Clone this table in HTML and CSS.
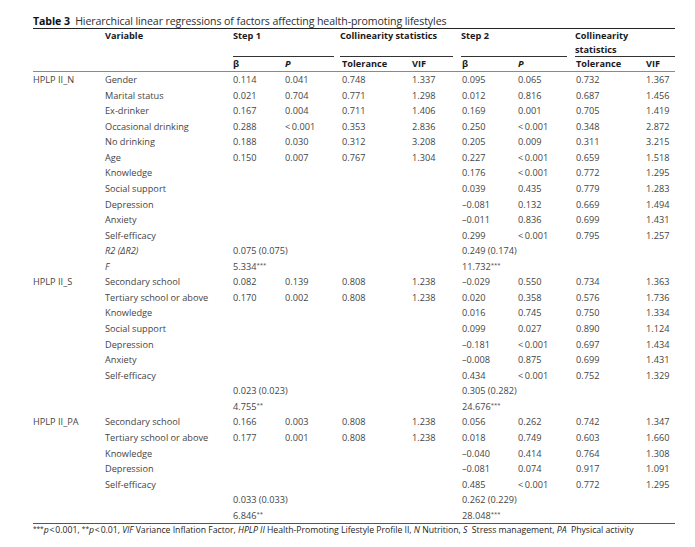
FILE: index.html
```html
<!DOCTYPE html>
<html>
<head>
<meta charset="utf-8">
<link rel="stylesheet" href="styles.css">
</head>
<body>
<div class="wrap">
  <div class="caption"><b>Table 3</b>&nbsp; Hierarchical linear regressions of factors affecting health-promoting lifestyles</div>
  <table class="tbl">
    <colgroup>
      <col class="c1"><col class="c2"><col class="c3"><col class="c4"><col class="c5"><col class="c6"><col class="c7"><col class="c8"><col class="c9"><col class="c10">
    </colgroup>
    <thead>
      <tr class="h1">
        <th></th>
        <th><div class="hb">Variable</div></th>
        <th colspan="2"><div class="hb grp g1">Step 1</div></th>
        <th colspan="2"><div class="hb grp g2 nowrap">Collinearity statistics</div></th>
        <th colspan="2"><div class="hb grp g3">Step 2</div></th>
        <th colspan="2"><div class="hb grp g4">Collinearity<br>statistics</div></th>
      </tr>
      <tr class="h2">
        <th></th><th></th>
        <th>β</th><th><i>P</i></th>
        <th>Tolerance</th><th>VIF</th>
        <th>β</th><th><i>P</i></th>
        <th>Tolerance</th><th>VIF</th>
      </tr>
    </thead>
    <tbody>
      <tr><td>HPLP II_N</td><td>Gender</td><td>0.114</td><td>0.041</td><td>0.748</td><td>1.337</td><td>0.095</td><td>0.065</td><td>0.732</td><td>1.367</td></tr>
      <tr><td></td><td>Marital status</td><td>0.021</td><td>0.704</td><td>0.771</td><td>1.298</td><td>0.012</td><td>0.816</td><td>0.687</td><td>1.456</td></tr>
      <tr><td></td><td>Ex-drinker</td><td>0.167</td><td>0.004</td><td>0.711</td><td>1.406</td><td>0.169</td><td>0.001</td><td>0.705</td><td>1.419</td></tr>
      <tr><td></td><td>Occasional drinking</td><td>0.288</td><td>&lt;&#8201;0.001</td><td>0.353</td><td>2.836</td><td>0.250</td><td>&lt;&#8201;0.001</td><td>0.348</td><td>2.872</td></tr>
      <tr><td></td><td>No drinking</td><td>0.188</td><td>0.030</td><td>0.312</td><td>3.208</td><td>0.205</td><td>0.009</td><td>0.311</td><td>3.215</td></tr>
      <tr><td></td><td>Age</td><td>0.150</td><td>0.007</td><td>0.767</td><td>1.304</td><td>0.227</td><td>&lt;&#8201;0.001</td><td>0.659</td><td>1.518</td></tr>
      <tr><td></td><td>Knowledge</td><td></td><td></td><td></td><td></td><td>0.176</td><td>&lt;&#8201;0.001</td><td>0.772</td><td>1.295</td></tr>
      <tr><td></td><td>Social support</td><td></td><td></td><td></td><td></td><td>0.039</td><td>0.435</td><td>0.779</td><td>1.283</td></tr>
      <tr><td></td><td>Depression</td><td></td><td></td><td></td><td></td><td>–0.081</td><td>0.132</td><td>0.669</td><td>1.494</td></tr>
      <tr><td></td><td>Anxiety</td><td></td><td></td><td></td><td></td><td>–0.011</td><td>0.836</td><td>0.699</td><td>1.431</td></tr>
      <tr><td></td><td>Self-efficacy</td><td></td><td></td><td></td><td></td><td>0.299</td><td>&lt;&#8201;0.001</td><td>0.795</td><td>1.257</td></tr>
      <tr><td></td><td><i>R2 (ΔR2)</i></td><td colspan="2">0.075 (0.075)</td><td></td><td></td><td colspan="2">0.249 (0.174)</td><td></td><td></td></tr>
      <tr><td></td><td><i>F</i></td><td colspan="2">5.334<sup>***</sup></td><td></td><td></td><td colspan="2">11.732<sup>***</sup></td><td></td><td></td></tr>

      <tr><td>HPLP II_S</td><td>Secondary school</td><td>0.082</td><td>0.139</td><td>0.808</td><td>1.238</td><td>–0.029</td><td>0.550</td><td>0.734</td><td>1.363</td></tr>
      <tr><td></td><td>Tertiary school or above</td><td>0.170</td><td>0.002</td><td>0.808</td><td>1.238</td><td>0.020</td><td>0.358</td><td>0.576</td><td>1.736</td></tr>
      <tr><td></td><td>Knowledge</td><td></td><td></td><td></td><td></td><td>0.016</td><td>0.745</td><td>0.750</td><td>1.334</td></tr>
      <tr><td></td><td>Social support</td><td></td><td></td><td></td><td></td><td>0.099</td><td>0.027</td><td>0.890</td><td>1.124</td></tr>
      <tr><td></td><td>Depression</td><td></td><td></td><td></td><td></td><td>–0.181</td><td>&lt;&#8201;0.001</td><td>0.697</td><td>1.434</td></tr>
      <tr><td></td><td>Anxiety</td><td></td><td></td><td></td><td></td><td>–0.008</td><td>0.875</td><td>0.699</td><td>1.431</td></tr>
      <tr><td></td><td>Self-efficacy</td><td></td><td></td><td></td><td></td><td>0.434</td><td>&lt;&#8201;0.001</td><td>0.752</td><td>1.329</td></tr>
      <tr><td></td><td></td><td colspan="2">0.023 (0.023)</td><td></td><td></td><td colspan="2">0.305 (0.282)</td><td></td><td></td></tr>
      <tr><td></td><td></td><td colspan="2">4.755<sup>**</sup></td><td></td><td></td><td colspan="2">24.676<sup>***</sup></td><td></td><td></td></tr>

      <tr><td>HPLP II_PA</td><td>Secondary school</td><td>0.166</td><td>0.003</td><td>0.808</td><td>1.238</td><td>0.056</td><td>0.262</td><td>0.742</td><td>1.347</td></tr>
      <tr><td></td><td>Tertiary school or above</td><td>0.177</td><td>0.001</td><td>0.808</td><td>1.238</td><td>0.018</td><td>0.749</td><td>0.603</td><td>1.660</td></tr>
      <tr><td></td><td>Knowledge</td><td></td><td></td><td></td><td></td><td>–0.040</td><td>0.414</td><td>0.764</td><td>1.308</td></tr>
      <tr><td></td><td>Depression</td><td></td><td></td><td></td><td></td><td>–0.081</td><td>0.074</td><td>0.917</td><td>1.091</td></tr>
      <tr><td></td><td>Self-efficacy</td><td></td><td></td><td></td><td></td><td>0.485</td><td>&lt;&#8201;0.001</td><td>0.772</td><td>1.295</td></tr>
      <tr><td></td><td></td><td colspan="2">0.033 (0.033)</td><td></td><td></td><td colspan="2">0.262 (0.229)</td><td></td><td></td></tr>
      <tr><td></td><td></td><td colspan="2">6.846<sup>**</sup></td><td></td><td></td><td colspan="2">28.048<sup>***</sup></td><td></td><td></td></tr>
    </tbody>
  </table>
  <div class="foot"><sup>***</sup><i>p</i>&#8202;&lt;&#8202;0.001, <sup>**</sup><i>p</i>&#8202;&lt;&#8202;0.01, <i>VIF</i> Variance Inflation Factor, <i>HPLP II</i> Health-Promoting Lifestyle Profile II, <i>N</i> Nutrition, <i>S</i>&nbsp; Stress management, <i>PA</i>&nbsp; Physical activity</div>
</div>
</body>
</html>
```

FILE: styles.css
```css
html, body {
  margin: 0;
  padding: 0;
  background: #ffffff;
}

body {
  font-family: "Open Sans", "Noto Sans", sans-serif;
  color: #454545;
}

.wrap {
  width: 642px;
  margin: 14px 0 0 33px;
}

.caption {
  font-size: 10.6px;
  line-height: 14px;
  color: #2e2e2e;
  border-bottom: 1px solid #222222;
  white-space: nowrap;
  letter-spacing: -0.1px;
}

.caption b {
  color: #111111;
  font-weight: 700;
}

.tbl {
  width: 642px;
  border-collapse: collapse;
  table-layout: fixed;
  font-size: 9.2px;
}

.c1 { width: 72px; }
.c2 { width: 128px; }
.c3 { width: 52px; }
.c4 { width: 57px; }
.c5 { width: 70px; }
.c6 { width: 50px; }
.c7 { width: 56px; }
.c8 { width: 58px; }
.c9 { width: 70px; }
.c10 { width: 29px; }

.tbl th {
  padding: 0;
  text-align: left;
  font-weight: 700;
  color: #1a1a1a;
  vertical-align: top;
  line-height: 14px;
}

.tbl th i {
  font-style: italic;
}

.hb {
  height: 28px;
  box-sizing: border-box;
}

.grp {
  border-bottom: 1px solid #333333;
}

.g1 { margin-right: 8px; }
.g2 { margin-left: -2px; margin-right: 9px; }
.g3 { margin-left: -1px; margin-right: 9px; }
.g4 { margin-left: -1px; }

.nowrap { white-space: nowrap; }

.h2 th {
  border-bottom: 1.5px solid #8a8a8a;
  height: 14px;
}

.tbl td {
  padding: 0;
  line-height: 15.56px;
  height: 15.56px;
  white-space: nowrap;
  vertical-align: middle;
  overflow: visible;
}

.tbl tbody tr:last-child td {
  border-bottom: 1.5px solid #555555;
}

.tbl sup {
  font-size: 6px;
  line-height: 0;
  vertical-align: 3px;
}

.foot {
  font-size: 8.7px;
  line-height: 13px;
  color: #1e1e1e;
  white-space: nowrap;
  letter-spacing: -0.02px;
}

.foot sup {
  font-size: 6.5px;
  line-height: 0;
  vertical-align: 2px;
}
```
